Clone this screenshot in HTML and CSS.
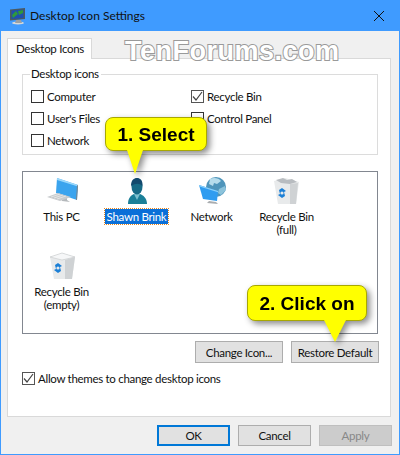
FILE: index.html
```html
<!DOCTYPE html>
<html lang="en">
<head>
    <meta charset="UTF-8">
    <title>Desktop Icon Settings</title>
    <link rel="stylesheet" href="styles.css">
</head>
<body>
    <div class="window">
        <div class="titlebar">
            <svg class="title-icon" width="18" height="18" viewBox="0 0 18 18">
                <ellipse cx="9" cy="16" rx="6" ry="1.500" fill="#d5d8da"/>
                <path d="M7 13h5l1 3H6z" fill="#9aa0a4"/>
                <path d="M1 2.500l15-1.500v11l-15 1.500z" fill="#4a5a62"/>
                <path d="M2.500 3.500l12-1v8.500l-12 1z" fill="#1f4fb0"/>
                <path d="M3 8l4-4 2 3-5 4z" fill="#2f9a3a"/>
                <path d="M9 4l5-1v3l-4 2z" fill="#2f9a3a"/>
            </svg>
            <span class="title-text">Desktop Icon Settings</span>
            <svg class="close-icon" width="10" height="10" viewBox="0 0 10 10">
                <path d="M0 0l10 10M10 0L0 10" stroke="#111" stroke-width="1" fill="none"/>
            </svg>
        </div>

        <div class="content">
            <div class="tabs">
                <div class="tab">Desktop Icons</div>
            </div>

            <div class="panel">
                <div class="groupbox">
                    <div class="legend">Desktop icons</div>
                    <div class="check-grid">
                        <div class="check"><span class="box"></span>Computer</div>
                        <div class="check"><span class="box checked"><svg width="11" height="11" viewBox="0 0 11 11"><path d="M1 5.500l3 3.500 6-8" stroke="#444" stroke-width="1.200" fill="none"/></svg></span>Recycle Bin</div>
                        <div class="check"><span class="box"></span>User's Files</div>
                        <div class="check"><span class="box"></span>Control Panel</div>
                        <div class="check"><span class="box"></span>Network</div>
                    </div>
                </div>

                <div class="iconlist">
                    <div class="item">
                        <svg class="glyph" width="32" height="32" viewBox="0 0 32 32">
                            <path d="M14 17l7 2v4l3 2-8-1z" fill="#b4b8bb"/>
                            <path d="M11 1l21 7-1 15-21-7z" fill="#3ba4ee"/>
                            <path d="M11 1l21 7v1.500L11 3z" fill="#9bd8fb"/>
                            <path d="M31 8.500l1-.5-1 15-1-.3z" fill="#7d8388"/>
                            <path d="M1 20l11-4 13 4-11 4z" fill="#c9ccce"/>
                            <path d="M5 20l9-3M8 21l9-3M11 22l9-3" stroke="#eee" stroke-width=".7"/>
                        </svg>
                        <div class="label">This PC</div>
                    </div>
                    <div class="item">
                        <svg class="glyph" width="32" height="32" viewBox="0 0 32 32">
                            <path d="M7 27c0-6 3-9 6-10h6c3 1 7 4 7 10z" fill="#1a7f98"/>
                            <path d="M13 17l3 6 3-6z" fill="#7cc0cf"/>
                            <ellipse cx="16" cy="9.500" rx="5.500" ry="8" fill="#176a86"/>
                            <path d="M10 9c0-6 3-8 6-8s6 2 5.500 8c-3-3-7-3-11.500 0z" fill="#134a6e"/>
                        </svg>
                        <div class="label selected">Shawn Brink</div>
                    </div>
                    <div class="item">
                        <svg class="glyph" width="32" height="32" viewBox="0 0 32 32">
                            <circle cx="20" cy="10" r="10" fill="#4f95bb"/>
                            <path d="M14 2c4-2 9-1 11 2l-4 3-3-1-1 3-4-2z" fill="#b6dcec"/>
                            <path d="M23 12l6-3 1 4-5 5-3-2z" fill="#8cc3db"/>
                            <path d="M13 24l7 1 2 2-11-1z" fill="#a9adb0"/>
                            <path d="M3 8l19 6-1 10-14-2z" fill="#2f9cf0"/>
                            <path d="M3 8l19 6v1.200L3.500 9.500z" fill="#8ad0fa"/>
                        </svg>
                        <div class="label">Network</div>
                    </div>
                    <div class="item">
                        <svg class="glyph" width="32" height="32" viewBox="0 0 32 32">
                            <path d="M3 4l11-3 14 4-3 22H7z" fill="#e8eaeb"/>
                            <path d="M5 3l7-2 4 2 5-1 5 3-7 2-9-1z" fill="#b8bcc0"/>
                            <path d="M19 7l8-1-2 21h-6z" fill="#cfd2d4"/>
                            <path d="M11 11l4 3-2 1 1 4-3 2-4-3 2-1-1-4z" fill="#1b7fd6"/>
                            <circle cx="11" cy="16" r="1.600" fill="#e8eaeb"/>
                        </svg>
                        <div class="label">Recycle Bin<br>(full)</div>
                    </div>
                    <div class="item">
                        <svg class="glyph" width="32" height="32" viewBox="0 0 32 32">
                            <path d="M4 5l12-4 13 4-3 22H8z" fill="#e8eaeb"/>
                            <path d="M4 5l12-4 13 4-13 3z" fill="#f6f7f8" stroke="#c4c8ca" stroke-width=".6"/>
                            <path d="M19 8l10-3-3 22h-7z" fill="#cfd2d4"/>
                            <path d="M12 11l4 3-2 1 1 4-3 2-4-3 2-1-1-4z" fill="#1b7fd6"/>
                            <circle cx="12" cy="16" r="1.600" fill="#e8eaeb"/>
                        </svg>
                        <div class="label">Recycle Bin<br>(empty)</div>
                    </div>
                </div>

                <div class="list-buttons">
                    <div class="btn">Change Icon...</div>
                    <div class="btn">Restore Default</div>
                </div>

                <div class="check allow"><span class="box checked"><svg width="11" height="11" viewBox="0 0 11 11"><path d="M1 5.500l3 3.500 6-8" stroke="#444" stroke-width="1.200" fill="none"/></svg></span>Allow themes to change desktop icons</div>
            </div>

            <div class="footer">
                <div class="btn btn-footer btn-default">OK</div>
                <div class="btn btn-footer">Cancel</div>
                <div class="btn btn-footer btn-disabled">Apply</div>
            </div>
        </div>
    </div>

    <!-- annotations on top of the screenshot -->
    <div class="watermark">TenForums.com</div>
    <div class="callout callout-select">1. Select</div>
    <div class="callout callout-click">2. Click on</div>
</body>
</html>
```

FILE: styles.css
```css
* {
    margin: 0;
    padding: 0;
    box-sizing: border-box;
}

body {
    width: 400px;
    height: 455px;
    position: relative;
    overflow: hidden;
    font-family: Lato, "Noto Sans", Arial, sans-serif;
    font-size: 11.500px;
    letter-spacing: -.3px;
    color: #111;
    white-space: nowrap;
}

.window {
    width: 400px;
    height: 455px;
    display: flex;
    flex-direction: column;
    background: #f0f0f0;
    border: 1px solid #3f9bff;
    border-top: none;
}

.titlebar {
    height: 31px;
    flex: none;
    margin: 0 -1px;
    padding: 0 9px;
    display: flex;
    align-items: center;
    background: #3f9bff;
}

.title-icon {
    margin-right: 3px;
}

.title-text {
    flex: 1;
    font-size: 12px;
    letter-spacing: 0;
}

.close-icon {
    margin-right: 7px;
}

.content {
    flex: 1;
    padding: 7px 8px 0 6px;
}

.tabs {
    height: 20px;
    display: flex;
}

.tab {
    width: 85px;
    height: 21px;
    padding-left: 8px;
    line-height: 19px;
    background: #fff;
    border: 1px solid #d9d9d9;
    border-bottom: none;
    position: relative;
    z-index: 1;
}

.panel {
    height: 359px;
    padding: 15px 12px 0 14px;
    background: #fff;
    border: 1px solid #d9d9d9;
}

.groupbox {
    height: 81px;
    padding: 10px 8px 0;
    border: 1px solid #dcdcdc;
    position: relative;
}

.legend {
    position: absolute;
    top: -8px;
    left: 7px;
    padding: 0 2px 0 1px;
    background: #fff;
}

.check-grid {
    display: grid;
    grid-template-columns: 160px 1fr;
    grid-auto-rows: 22px;
}

.check {
    display: flex;
    align-items: center;
    gap: 3px;
}

.box {
    width: 13px;
    height: 13px;
    flex: none;
    background: #fff;
    border: 1px solid #333;
    display: flex;
    align-items: center;
    justify-content: center;
}

.box.checked {
    border-color: #555;
}

.iconlist {
    height: 163px;
    margin-top: 16px;
    padding-top: 5px;
    padding-left: 1px;
    border: 1px solid #828790;
    display: grid;
    grid-template-columns: repeat(4, 75px);
    grid-auto-rows: 75px;
}

.item {
    display: flex;
    flex-direction: column;
    align-items: center;
    text-align: center;
    line-height: 13px;
}

.label {
    padding: 1px 2px;
}

.label.selected {
    background: #0a6fd8;
    color: #fff;
    outline: 1px dotted #e8861c;
}

.list-buttons {
    margin-top: 7px;
    margin-right: -1px;
    display: flex;
    justify-content: flex-end;
    gap: 8px;
}

.btn {
    width: 88px;
    height: 22px;
    display: flex;
    align-items: center;
    justify-content: center;
    background: #e1e1e1;
    border: 1px solid #adadad;
}

.allow {
    margin-top: 9px;
}

.footer {
    margin-top: 8px;
    margin-right: -1px;
    display: flex;
    justify-content: flex-end;
    gap: 8px;
}

.btn-footer {
    width: 73px;
    height: 21px;
}

.btn-default {
    border: 2px solid #0078d7;
}

.btn-disabled {
    background: #ccc;
    border-color: #bfbfbf;
    color: #888;
}

.watermark {
    position: absolute;
    top: 36px;
    left: 125px;
    font-family: "Liberation Sans", Arial, sans-serif;
    font-size: 27px;
    font-weight: bold;
    letter-spacing: .5px;
    color: #fff;
    -webkit-text-stroke: 2px #9a9a9a;
    paint-order: stroke fill;
}

.callout {
    position: absolute;
    padding-top: 2px;
    display: flex;
    align-items: center;
    justify-content: center;
    font-family: "Liberation Sans", Arial, sans-serif;
    font-size: 19px;
    font-weight: bold;
    letter-spacing: 0;
    color: #000;
    background: #ffff00;
    border: 1px solid #a8a800;
    border-radius: 8px;
    filter: drop-shadow(3px 3px 3px rgba(0,0,0,0.45));
}

.callout::after {
    content: "";
    position: absolute;
    top: 100%;
    left: 21px;
    border-style: solid;
    border-width: 24px 8px 0;
    border-color: #ffff00 transparent transparent;
}

.callout-select {
    top: 117px;
    left: 105px;
    width: 102px;
    height: 34px;
}

.callout-click {
    top: 285px;
    left: 247px;
    width: 120px;
    height: 36px;
}

.callout-click::after {
    left: 76px;
    border-width: 22px 11px 0;
}
```
